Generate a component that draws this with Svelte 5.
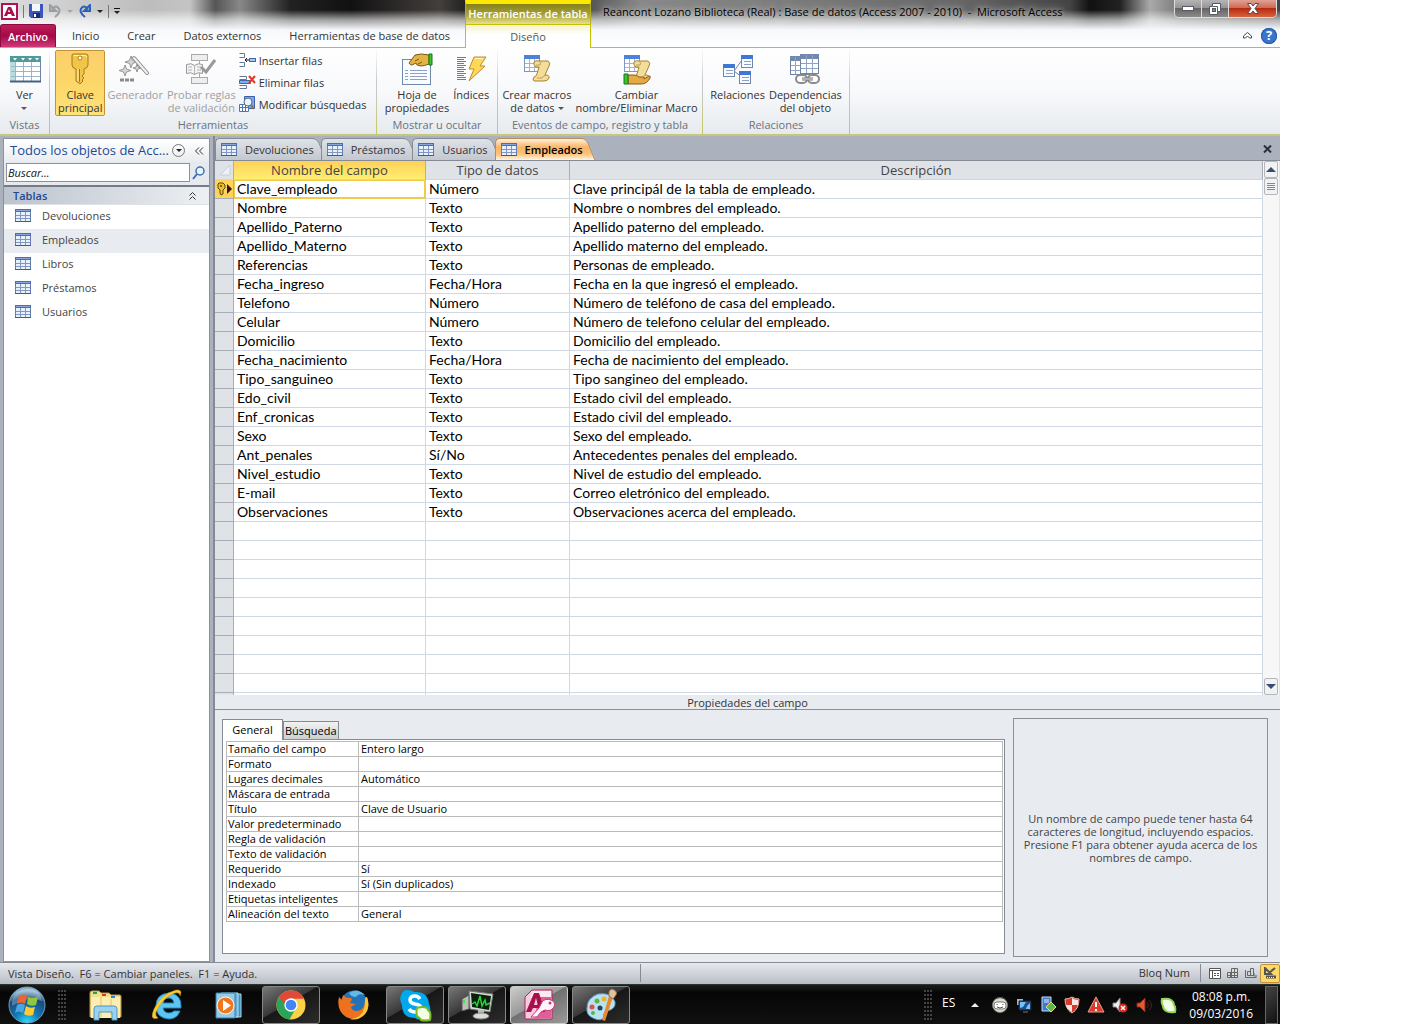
<script lang="ts">
  type Field = { name: string; type: string; desc: string };

  const ribbonTabs = ["Inicio", "Crear", "Datos externos", "Herramientas de base de datos"];

  const tables = ["Devoluciones", "Empleados", "Libros", "Préstamos", "Usuarios"];
  const docTabs = ["Devoluciones", "Préstamos", "Usuarios", "Empleados"];
  let current = $state("Empleados");
  let propTab = $state("General");

  const fields: Field[] = [
    { name: "Clave_empleado", type: "Número", desc: "Clave principál de la tabla de empleado." },
    { name: "Nombre", type: "Texto", desc: "Nombre o nombres del empleado." },
    { name: "Apellido_Paterno", type: "Texto", desc: "Apellido paterno del empleado." },
    { name: "Apellido_Materno", type: "Texto", desc: "Apellido materno del empleado." },
    { name: "Referencias", type: "Texto", desc: "Personas de empleado." },
    { name: "Fecha_ingreso", type: "Fecha/Hora", desc: "Fecha en la que ingresó el empleado." },
    { name: "Telefono", type: "Número", desc: "Número de teléfono de casa del empleado." },
    { name: "Celular", type: "Número", desc: "Número de telefono celular del empleado." },
    { name: "Domicilio", type: "Texto", desc: "Domicilio del empleado." },
    { name: "Fecha_nacimiento", type: "Fecha/Hora", desc: "Fecha de nacimiento del empleado." },
    { name: "Tipo_sanguineo", type: "Texto", desc: "Tipo sangineo del empleado." },
    { name: "Edo_civil", type: "Texto", desc: "Estado civil del empleado." },
    { name: "Enf_cronicas", type: "Texto", desc: "Estado civil del empleado." },
    { name: "Sexo", type: "Texto", desc: "Sexo del empleado." },
    { name: "Ant_penales", type: "Sí/No", desc: "Antecedentes penales del empleado." },
    { name: "Nivel_estudio", type: "Texto", desc: "Nivel de estudio del empleado." },
    { name: "E-mail", type: "Texto", desc: "Correo eletrónico del empleado." },
    { name: "Observaciones", type: "Texto", desc: "Observaciones acerca del empleado." },
  ];
  // empty rows below the last field
  const blankRows = Array.from({ length: 10 });

  const props = [
    ["Tamaño del campo", "Entero largo"],
    ["Formato", ""],
    ["Lugares decimales", "Automático"],
    ["Máscara de entrada", ""],
    ["Título", "Clave de Usuario"],
    ["Valor predeterminado", ""],
    ["Regla de validación", ""],
    ["Texto de validación", ""],
    ["Requerido", "Sí"],
    ["Indexado", "Sí (Sin duplicados)"],
    ["Etiquetas inteligentes", ""],
    ["Alineación del texto", "General"],
  ];

  const taskItems = [
    { id: "explorer", label: "Explorador de Windows", open: false },
    { id: "ie", label: "Internet Explorer", open: false },
    { id: "wmp", label: "Reproductor de Windows Media", open: false },
    { id: "chrome", label: "Google Chrome", open: true },
    { id: "firefox", label: "Firefox", open: false },
    { id: "skype", label: "Skype", open: true },
    { id: "taskmgr", label: "Administrador de tareas", open: true },
    { id: "access", label: "Microsoft Access", open: true },
    { id: "paint", label: "Paint", open: true },
  ];
  const trayItems = ["face", "screens", "server", "shield", "warning", "muted", "sound", "leaf"];
</script>

{#snippet sheet()}
  <svg width="16" height="13" viewBox="0 0 16 13" aria-hidden="true">
    <rect x="0.5" y="0.5" width="15" height="12" fill="#e9f0fb" stroke="#5f7db0" />
    <rect width="16" height="3" fill="#4a6fae" />
    <path d="M1 1.5h14" stroke="#86a7dc" />
    <path d="M1 6.5h14M1 9.5h14M5.5 3v10M10.5 3v10" stroke="#7f98c2" />
    <path d="M0 12.5h16" stroke="#3f5a8c" />
  </svg>
{/snippet}

{#snippet bigIcon(name: string)}
  <svg width="32" height="32" viewBox="0 0 32 32" aria-hidden="true">
    {#if name === "view"}
      <rect x="1.5" y="3.5" width="30" height="25" fill="#fff" stroke="#6d84a6" />
      <rect x="1" y="3" width="31" height="6" fill="#4f9a9d" />
      <path d="M4 5h4l-2 2.500zM12 5h4l-2 2.500zM19 5h4l-2 2.500zM26 5h4l-2 2.500z" fill="#fff" />
      <rect x="1" y="9" width="5" height="19" fill="#b9dcdc" />
      <path d="M2 13.500h29M2 18.500h29M2 23.500h29M6.500 9v19M14.500 9v19M22.500 9v19" stroke="#9fb2cd" />
      <path d="M1 28.500h31" stroke="#456083" stroke-width="2" />
    {:else if name === "key"}
      <path d="M9 1h13q2 0 2 2v9q0 3-4 4v5l-2 2 2 2-2 2 1 1-3 3-4-3V16q-4-1-4-4V3q0-2 1-2z" fill="#f0c548" stroke="#a77b1d" />
      <path d="M10 2.500h11q1.500 0 1.500 2" fill="none" stroke="#fff3b3" />
      <circle cx="16" cy="5" r="2" fill="#fff" stroke="#a77b1d" />
      <path d="M15.500 16v13" stroke="#9b741b" />
      <path d="M14 16v12" stroke="#fdf0a6" />
    {:else if name === "wand"}
      <path d="M12 3l1.500 4.500L18 9l-4.500 1.500L12 15l-1.500-4.500L6 9l4.500-1.500zM18 11l1 3 3 1-3 1-1 3-1-3-3-1 3-1zM6 12l1.500 4L12 17.500 7.500 19 6 23l-1.500-4L0 17.500 4.500 16z" fill="#d5d5d5" stroke="#989898" />
      <path d="M15 5l13 15" stroke="#8d8d8d" stroke-width="4" stroke-linecap="round" />
      <path d="M15 5l13 15" stroke="#f2f2f2" stroke-width="2" stroke-linecap="round" />
      <path d="M1 27h14" stroke="#8a8a8a" stroke-width="3" stroke-dasharray="4 1" />
    {:else if name === "rules"}
      <path d="M14.500 7v19" stroke="#aaa" />
      <rect x="6.500" y="1.500" width="16" height="6" fill="#eee" stroke="#aaa" />
      <rect x="6.500" y="24.500" width="16" height="6" fill="#eee" stroke="#aaa" />
      <path d="M1.500 11.500q5-2 8 1 4-3 8-1v9q-4-2-8 1-4-3-8-1z" fill="#f3f3f3" stroke="#989898" />
      <path d="M9.500 12v9M3 14h4M3 17h4M12 14h4M12 17h4" stroke="#b5b5b5" />
      <path d="M16 14l5 5L30 7" fill="none" stroke="#999" stroke-width="3" />
    {:else if name === "sheetHand"}
      <rect x="1.500" y="6.500" width="28" height="25" fill="#f8fbff" stroke="#7188ad" />
      <path d="M4 17.500h3M9 17.500h17M4 20.500h3M9 20.500h17M4 23.500h3M9 23.500h17M4 26.500h3M9 26.500h17" stroke="#8ba0c2" />
      <path d="M8 10l6-8q6-2 14 0v9q-5 2-8 2l-4-1-1-2-4 2q-2 0-3-2z" fill="#e3b345" stroke="#7c5718" />
      <path d="M14 8l4-2M17 11l4-2" stroke="#7c5718" />
      <path d="M28 1h3v11h-3z" fill="#35c52d" stroke="#16781a" />
    {:else if name === "bolt"}
      <path d="M2 4.500h9M2 6.500h7M2 8.500h9M2 10.500h7M2 12.500h9M2 14.500h7M2 16.500h9M2 18.500h7M2 20.500h9M2 22.500h7M2 24.500h9M2 26.500h9" stroke="#7b7b7b" />
      <path d="M19 4h12l-6 9h5L14 28l5-12h-5z" fill="#ffd759" stroke="#c38b26" />
      <path d="M20 5.500h8" stroke="#fff6c9" />
    {:else if name === "macro" || name === "rename"}
      <rect x="3.500" y="2.500" width="15" height="16" fill="#fff" stroke="#7c96c6" />
      <rect x="3" y="2" width="16" height="4" fill="#4e82da" />
      <path d="M4 10.500h14M4 14.500h14M8.500 6v12M13.500 6v12" stroke="#a2b4d5" />
      <path d="M13 9q2-2 5-1h9q3 2 1 5l-4 9q5 0 4 3-1 3-5 3H13q-2-2 0-4 2 0 3-3l2-7h-3q-3-2-2-5z" fill="#f3dd9a" stroke="#a9822f" />
      <path d="M15 12h4q1-1 0-3M16 25h5q1-2 4-3" fill="none" stroke="#c29c4d" />
      {#if name === "rename"}
        <path d="M7 22h6q3 0 5 2h4q2 0 1 2l5-3q2 0 1 2-3 6-9 6H7z" fill="#e3aa45" stroke="#8a5b18" />
        <path d="M3 21h4v10H3z" fill="#35c52d" stroke="#16781a" />
      {/if}
    {:else if name === "relations"}
      <path d="M12 18l8-11M12 18l8 6" stroke="#6f83a5" fill="none" />
      {#each [[1, 11], [19, 2], [17, 18]] as [x, y]}
        <rect x={x + 0.5} y={y + 0.5} width="11" height="12" fill="#f8fbff" stroke="#7188ad" />
        <rect {x} {y} width="12" height="4" rx="1" fill="#3d77d8" />
        <path d="M{x + 3} {y + 6.5}h7M{x + 3} {y + 9.5}h7" stroke="#8ba0c2" />
      {/each}
    {:else if name === "depends"}
      <rect x="1.500" y="3.500" width="19" height="18" fill="#fff" stroke="#6d84a6" />
      <rect x="1" y="3" width="19" height="5" fill="#7388ae" />
      <path d="M2 12.500h10M2 17.500h10M6.500 4v17" stroke="#8fa3c4" />
      <rect x="11.500" y="1.500" width="18" height="19" fill="#fff" stroke="#6d84a6" />
      <rect x="11" y="1" width="19" height="5" fill="#7388ae" />
      <path d="M12 10.500h17M12 15.500h17M17.500 2v18M23.500 2v18" stroke="#8fa3c4" />
      <rect x="7" y="22" width="11" height="8" rx="4" fill="#fff" stroke="#8a8a8a" stroke-width="2" />
      <rect x="19" y="22" width="11" height="8" rx="4" fill="#fff" stroke="#8a8a8a" stroke-width="2" />
      <path d="M13 26h11" stroke="#777" stroke-width="3" />
      <path d="M13 26h11" stroke="#e8e8e8" />
    {/if}
  </svg>
{/snippet}

{#snippet bigButton(icon: string, label: string, disabled = false, active = false, menu = false)}
  <button class="big" class:active {disabled}>
    {@render bigIcon(icon)}
    <span>{label}{#if menu}<i class="caret"></i>{/if}</span>
  </button>
{/snippet}

{#snippet taskIcon(name: string)}
  <svg width="34" height="34" viewBox="0 0 34 34" aria-hidden="true">
    {#if name === "explorer"}
      <path d="M2 5q0-2 2-2h7l2 2h8l2 2h9q1 0 1 2v20H2z" fill="#f4dd8b" stroke="#b89643" />
      <path d="M3 9h29v21H3z" fill="#fbeeb0" />
      <path d="M5 5h4" stroke="#18a44a" stroke-width="2" />
      <path d="M14 7h4" stroke="#d3362c" stroke-width="2" />
      <path d="M23 9h4" stroke="#2185d7" stroke-width="2" />
      <path d="M13 9v20M23 11v16" stroke="#dfc36b" />
      <path d="M6 32V21q0-3 3-3h17q3 0 3 3v11h-5v-8H11v8z" fill="#9bd3ee" stroke="#4e96c3" />
    {:else if name === "ie"}
      <path d="M31 20H13q1 5 6 5 3 0 5-2h6q-3 8-11 8Q6 30 6 18T19 5q13 1 12 15zM13 15h11q-1-5-5.500-5T13 15z" fill="#5cc6f2" stroke="#2587c4" fill-rule="evenodd" />
      <path d="M8 30Q-1 33 4 21 11 6 26 2q7-1 4 6 0-4-5-3Q13 9 6 24q-1 4 2 6z" fill="#f8cc35" stroke="#c98e13" stroke-width="0.500" />
    {:else if name === "wmp"}
      <path d="M12 6h17v23H12z" fill="#3e8fc2" stroke="#a6d8ef" />
      <path d="M9 5h17v24H9z" fill="#65afd7" stroke="#b7e2f5" />
      <path d="M4 5h19v25H4z" fill="#93cce9" stroke="#397ca9" />
      <circle cx="13.500" cy="17.500" r="8.500" fill="#ef7720" stroke="#fff" />
      <path d="M11 12l8 5.500-8 5.500z" fill="#fff" />
    {:else if name === "chrome"}
      <circle cx="17" cy="17" r="14.500" fill="#fbd245" />
      <path d="M17 17L4.500 9.700A14.500 14.500 0 0 0 15.500 31.400L22 20z" fill="#2ba45a" />
      <path d="M17 2.500A14.500 14.500 0 0 1 30.200 10.700H17L10 15 4.500 9.700A14.500 14.500 0 0 1 17 2.500z" fill="#df4b3a" />
      <circle cx="17" cy="17" r="6.700" fill="#fff" />
      <circle cx="17" cy="17" r="5.300" fill="#4285f4" />
    {:else if name === "firefox"}
      <circle cx="18" cy="16" r="13.500" fill="#2472b8" />
      <path d="M13 5q8-6 16 2-7-2-9 2-5 0-7-4z" fill="#64b9e6" />
      <path d="M31 9q4 11-3 18-8 7-18 2Q0 22 3 9l3 3 1-5 4 3q3-1 5 1l-2 4 6 1-5 3q1 4 6 4 9-1 8-14z" fill="#ee711d" />
      <path d="M31 9q4 12-4 19-6 5-13 3 16-1 15-20z" fill="#fbc832" />
    {:else if name === "skype"}
      <path d="M9 2q5 0 7 2 14-1 15 12 4 9-4 14-6 3-10 0Q4 30 4 17q-3-6-1-10 2-5 6-5z" fill="#00a9ed" />
      <path d="M22 11q-2-3-5-3-5 0-5 4 0 3 5 4 6 1 6 4 0 4-6 4-4 0-6-3" fill="none" stroke="#fff" stroke-width="3.500" />
      <path d="M19 20q6-2 10 0 1 3 3 4 1 4 0 8-5 1-9 0-1-2-4-4-1-4 0-8z" fill="#f5ffe1" stroke="#79b928" stroke-width="2" />
    {:else if name === "taskmgr"}
      <path d="M2 11l7-4v14l-7 2z" fill="#bcbfb8" stroke="#555" />
      <path d="M4 12v3" stroke="#3fe841" stroke-width="2" />
      <path d="M9 3l24 3-3 18-20-3z" fill="#d8dbd4" stroke="#777" />
      <path d="M11 5l20 3-2 14-17-3z" fill="#07210a" />
      <path d="M12 16l3-2 2 4 3-10 2 10 3-6 1 5 4-2" fill="none" stroke="#28d43a" stroke-width="1.500" />
      <path d="M18 22h6v6h-6z" fill="#bbb" />
      <ellipse cx="21" cy="28" rx="8" ry="3" fill="#dadcd8" stroke="#888" />
    {:else if name === "access"}
      <path d="M10 2h20v29H3V9z" fill="#f9cadd" stroke="#b3235f" />
      <path d="M11 3h18v7H8z" fill="#fceaf2" />
      <path d="M16 9h13v21H13z" fill="#df5f98" />
      <path d="M12 5h5l6 19h-5l-1-4h-6l-2 4H4zM14 10l-2 7h4z" fill="#a80f4b" fill-rule="evenodd" />
      <path d="M20 14q3-4 9-2 5 2 3 7-3 5-9 3l-4 2-4 5H9l8-9z" fill="#fff4f8" stroke="#c93878" />
      <circle cx="28" cy="15" r="1.500" fill="#c93878" />
    {:else if name === "paint"}
      <path d="M3 20q0-10 11-14 14-2 17 8 1 7-8 9-4 1-3 6-3 5-11 1Q2 27 3 20z" fill="#b9e1f4" stroke="#6b9fc0" />
      <circle cx="8" cy="19" r="2.500" fill="#e24f43" />
      <circle cx="13" cy="13" r="2.500" fill="#61b343" />
      <circle cx="20" cy="11" r="2.500" fill="#f2b423" />
      <circle cx="9" cy="25" r="2" fill="#61b343" />
      <circle cx="16" cy="20" r="2.500" fill="#244759" />
      <path d="M25 8l4 1-8 24-3-1z" fill="#e9892e" />
      <path d="M25 8q-1-6 3-7 6 2 4 6l-3 4z" fill="#e3c399" stroke="#936b42" />
    {/if}
  </svg>
{/snippet}

{#snippet trayIcon(name: string)}
  <svg width="18" height="18" viewBox="0 0 18 18" aria-hidden="true">
    {#if name === "face"}
      <circle cx="9" cy="9" r="7.500" fill="#dadbd1" stroke="#75796b" />
      <rect x="3" y="6" width="12" height="7" rx="3" fill="#fff" stroke="#777" />
      <path d="M6 8v1M12 8v1M6 11q3 2 6 0M4 3q5-3 10 0" fill="none" stroke="#555" />
    {:else if name === "screens"}
      <path d="M2 3h6v6H2z" fill="#9fb8cc" />
      <path d="M4 5h12v9H4z" fill="#1e4f8c" stroke="#222" />
      <path d="M5 6h6l-3 5-3 1zM12 10l3-3v6h-4z" fill="#72c1ff" />
      <path d="M8 16h5" stroke="#777" />
    {:else if name === "server"}
      <path d="M3 1h9v14H3z" fill="#3f79d0" stroke="#c6ddfa" />
      <path d="M5 4h5M5 6h5" stroke="#e3f0ff" />
      <path d="M12 6l5 5-5 5-5-5z" fill="#5cb84c" stroke="#f0dd6d" />
    {:else if name === "shield"}
      <path d="M9 1q3 2 7 2 0 10-7 14Q2 13 2 3q4 0 7-2z" fill="#d8382a" stroke="#e9b8b0" />
      <path d="M9 2q3 2 6 2v5H9zM3 9h6v7Q4 13 3 9z" fill="#f8e7e3" />
    {:else if name === "warning"}
      <path d="M9 1l8 15H1z" fill="#da3b2b" stroke="#f09a8e" />
      <path d="M9 6v5M9 13v2" stroke="#fff" stroke-width="2" />
    {:else if name === "muted"}
      <path d="M2 7h3l4-5v14l-4-5H2z" fill="#eee" stroke="#888" />
      <circle cx="12" cy="12" r="4.500" fill="#d8281d" />
      <path d="M10 10l4 4M14 10l-4 4" stroke="#fff" stroke-width="1.500" />
    {:else if name === "sound"}
      <path d="M2 7h3l5-5v14l-5-5H2z" fill="#e05a38" stroke="#8b2715" />
      <path d="M12 6q3 3 0 6M14 4q5 5 0 10" fill="none" stroke="#5c1f16" />
    {:else if name === "leaf"}
      <path d="M3 3q6-1 9 1 3 2 3 5 2 2 1 7-6 1-9-1-3-2-3-5-2-3-1-7z" fill="#f2ffe8" stroke="#91d44f" stroke-width="2" />
    {/if}
  </svg>
{/snippet}

<div class="desktop">
  <header>
    <div class="quick">
      <svg width="17" height="17" viewBox="0 0 17 17" aria-hidden="true">
        <rect x="1" y="1" width="15" height="15" fill="#fff" stroke="#b01253" stroke-width="2" />
        <path d="M7 4h3l4 9h-3l-1-2H7l-1 2H3zM8 6l-1 3h2z" fill="#a90d4d" fill-rule="evenodd" />
      </svg>
      <i class="bar"></i>
      <button aria-label="Guardar">
        <svg width="14" height="14" viewBox="0 0 14 14"><path d="M0 0h14v14H2l-2-2z" fill="#3b56bd" /><path d="M3 0h8v7H3z" fill="#f2f6ff" /><path d="M4 9h7v5H4z" fill="#1c2d68" /><path d="M5 10h2v3H5z" fill="#fff" /></svg>
      </button>
      <button aria-label="Deshacer">
        <svg width="14" height="14" viewBox="0 0 14 14"><path d="M2 1v6h6zM4 5.500Q7 1 10 3.500q4 4-3 9.500" fill="none" stroke="#9a9da2" stroke-width="2" /></svg>
      </button>
      <i class="caret dim"></i>
      <button aria-label="Rehacer">
        <svg width="14" height="14" viewBox="0 0 14 14"><path d="M12 1v6H6zM10 5.500Q7 1 4 3.500q-4 4 3 9.500" fill="none" stroke="#2e62b8" stroke-width="2" /></svg>
      </button>
      <i class="caret"></i>
      <i class="bar"></i>
      <button class="custom" aria-label="Personalizar barra"><i class="caret"></i></button>
    </div>
    <div class="context-name">Herramientas de tabla</div>
    <div class="title-row">
      <span>Reancont Lozano Biblioteca (Real) : Base de datos (Access 2007 - 2010)&nbsp; -&nbsp; Microsoft Access</span>
      <div class="window-buttons">
        <button aria-label="Minimizar"><svg width="12" height="5" viewBox="0 0 12 5"><rect x="0.500" y="0.500" width="11" height="4" fill="#fff" stroke="#555a66" /></svg></button>
        <button aria-label="Restaurar"><svg width="12" height="12" viewBox="0 0 12 12"><path d="M3.500 0.500h8v8h-3v3h-8v-8h3z" fill="#fff" stroke="#555a66" /><rect x="3.500" y="5.500" width="3" height="3" fill="#888" stroke="#555a66" /><path d="M4 3.500h4.500v5" fill="none" stroke="#555a66" /></svg></button>
        <button class="close" aria-label="Cerrar"><svg width="12" height="11" viewBox="0 0 12 11"><path d="M0.500 0.500h3.500l2 2.500 2-2.500h3.500l-3.500 5 3.500 5H8l-2-2.500-2 2.500H0.500l3.500-5z" fill="#fff" stroke="#5d4650" /></svg></button>
      </div>
    </div>
    <nav class="ribbon-tabs">
      <button class="file">Archivo</button>
      {#each ribbonTabs as tab}
        <button>{tab}</button>
      {/each}
    </nav>
    <button class="context-tab">Diseño</button>
    <div class="help">
      <button aria-label="Minimizar la cinta"><svg width="9" height="7" viewBox="0 0 9 7"><path d="M0.500 4L4.500 0.500 8.500 4v2h-2l-2-2-2 2h-2z" fill="#fff" stroke="#42464e" /></svg></button>
      <button class="ask" aria-label="Ayuda">?</button>
    </div>
  </header>

  <section class="ribbon">
    <div class="group views">
      <div class="group-body">{@render bigButton("view", "Ver\n", false, false, true)}</div>
      <h2>Vistas</h2>
    </div>
    <div class="group tools">
      <div class="group-body">
        {@render bigButton("key", "Clave\nprincipal", false, true)}
        {@render bigButton("wand", "Generador", true)}
        {@render bigButton("rules", "Probar reglas\nde validación", true)}
        <div class="small-buttons">
          <button>
            <svg width="17" height="16" viewBox="0 0 17 16" aria-hidden="true"><path d="M0.500 1.500h5v4h-5M0.500 10.500h5v4h-5" fill="#fff" stroke="#64779b" /><path d="M6 8h4M8 6L6 8l2 2" stroke="#111" fill="none" /><rect x="10.500" y="6.500" width="6" height="3" fill="#a6c5ef" stroke="#3e68a7" /></svg>
            Insertar filas
          </button>
          <button>
            <svg width="17" height="16" viewBox="0 0 17 16" aria-hidden="true"><path d="M0.500 2.500h7v3h-7M0.500 11.500h7v3h-7" fill="#fff" stroke="#64779b" /><path d="M0.500 6.500h11v3h-11z" fill="#80aef0" stroke="#3e68a7" /><path d="M10 2l6 7M16 2l-6 7" stroke="#e23b22" stroke-width="2" /></svg>
            Eliminar filas
          </button>
          <button>
            <svg width="17" height="16" viewBox="0 0 17 16" aria-hidden="true"><path d="M5.500 0.500h10v12h-10z" fill="#7fa5ea" stroke="#365fae" /><path d="M0.500 8.500h9v7h-9zM0 11.500h10M3.500 8v8M6.500 8v8" fill="#fff" stroke="#4c74b8" /><circle cx="9" cy="6" r="4" fill="#eef5ff" stroke="#596b8a" /><path d="M12 9l3 4" stroke="#9c6e37" stroke-width="2" /></svg>
            Modificar búsquedas
          </button>
        </div>
      </div>
      <h2>Herramientas</h2>
    </div>
    <div class="group show">
      <div class="group-body">
        {@render bigButton("sheetHand", "Hoja de\npropiedades")}
        {@render bigButton("bolt", "Índices")}
      </div>
      <h2>Mostrar u ocultar</h2>
    </div>
    <div class="group events">
      <div class="group-body">
        {@render bigButton("macro", "Crear macros\nde datos", false, false, true)}
        {@render bigButton("rename", "Cambiar\nnombre/Eliminar Macro")}
      </div>
      <h2>Eventos de campo, registro y tabla</h2>
    </div>
    <div class="group relations">
      <div class="group-body">
        {@render bigButton("relations", "Relaciones")}
        {@render bigButton("depends", "Dependencias\ndel objeto")}
      </div>
      <h2>Relaciones</h2>
    </div>
  </section>

  <div class="workspace">
    <aside>
      <div class="nav-title">
        <span>Todos los objetos de Acc...</span>
        <button class="round" aria-label="Elegir categoría"><i class="caret"></i></button>
        <button class="collapse" aria-label="Contraer panel">
          <svg width="9" height="8" viewBox="0 0 9 8"><path d="M4 0.500L0.500 4 4 7.500M8 0.500L4.500 4 8 7.500" fill="none" stroke="#333" /></svg>
        </button>
      </div>
      <div class="search">
        <input type="text" placeholder="Buscar..." aria-label="Buscar" />
        <button aria-label="Buscar objetos"><svg width="13" height="14" viewBox="0 0 13 14"><circle cx="8" cy="5" r="4" fill="#eaf4ff" stroke="#3f6fb2" stroke-width="1.500" /><path d="M5 8L1 13" stroke="#3f6fb2" stroke-width="2" /></svg></button>
      </div>
      <button class="nav-group">
        Tablas
        <svg width="7" height="8" viewBox="0 0 7 8" aria-hidden="true"><path d="M0.500 3.500l3-3 3 3M0.500 7.500l3-3 3 3" fill="none" stroke="#333" /></svg>
      </button>
      <ul>
        {#each tables as table}
          <li><button class:selected={table === current} onclick={() => (current = table)}>{@render sheet()}{table}</button></li>
        {/each}
      </ul>
    </aside>

    <main>
      <div class="doc-tabs">
        {#each docTabs as tab}
          <button class="doc" class:current={tab === current} onclick={() => (current = tab)}>{@render sheet()}{tab}</button>
        {/each}
        <button class="close-doc" aria-label="Cerrar tabla"><svg width="9" height="8" viewBox="0 0 9 8"><path d="M1 0.500l7 7M8 0.500l-7 7" stroke="#2d3038" stroke-width="2" /></svg></button>
      </div>

      <div class="design">
        <div class="grid">
          <table>
            <colgroup><col class="c-select" /><col class="c-name" /><col class="c-type" /><col /></colgroup>
            <thead>
              <tr>
                <th class="corner"><svg width="12" height="12" viewBox="0 0 12 12" aria-hidden="true"><path d="M11 1v10H1z" fill="#eef0f3" stroke="#c5cfdc" /></svg></th>
                <th class="hot">Nombre del campo</th>
                <th>Tipo de datos</th>
                <th>Descripción</th>
              </tr>
            </thead>
            <tbody>
              {#each fields as field, i}
                <tr class:active={i === 0}>
                  <td class="selector">
                    {#if i === 0}
                      <svg width="15" height="14" viewBox="0 0 15 14" aria-hidden="true"><path d="M2 1h4l2 2v3L6 8v4l-2 1-1-2V8L1 6V2z" fill="#e9c030" stroke="#5f4305" /><circle cx="4" cy="4" r="1" fill="#5f4305" /><path d="M10 2l5 5-5 5z" fill="#3a1212" /></svg>
                    {/if}
                  </td>
                  <td>{field.name}</td>
                  <td>{field.type}</td>
                  <td>{field.desc}</td>
                </tr>
              {/each}
              {#each blankRows as _}
                <tr><td class="selector"></td><td></td><td></td><td></td></tr>
              {/each}
            </tbody>
          </table>
        </div>
        <div class="scrollbar">
          <button aria-label="Subir"><i class="tri up"></i></button>
          <div class="thumb"></div>
          <button class="down" aria-label="Bajar"><i class="tri"></i></button>
        </div>
      </div>

      <h3>Propiedades del campo</h3>
      <div class="properties">
        <div class="prop-panel">
          <div class="prop-tabs">
            {#each ["General", "Búsqueda"] as tab}
              <button class:on={tab === propTab} onclick={() => (propTab = tab)}>{tab}</button>
            {/each}
          </div>
          <div class="prop-body">
            <table>
              <tbody>
                {#each props as [name, value]}
                  <tr><th scope="row">{name}</th><td>{value}</td></tr>
                {/each}
              </tbody>
            </table>
          </div>
        </div>
        <p>Un nombre de campo puede tener hasta 64 caracteres de longitud, incluyendo espacios. Presione F1 para obtener ayuda acerca de los nombres de campo.</p>
      </div>
    </main>
  </div>

  <div class="status">
    <span class="hint">Vista Diseño.&nbsp; F6 = Cambiar paneles.&nbsp; F1 = Ayuda.</span>
    <span class="num">Bloq Num</span>
    <div class="view-buttons">
      <button aria-label="Vista Hoja de datos"><svg width="12" height="11" viewBox="0 0 12 11"><path d="M0.500 0.500h11v10h-11zM1 2.500h10M3.500 3v7M5 5.500h2M8 5.500h2M5 7.500h2M8 7.500h2" fill="#fff" stroke="#555" /></svg></button>
      <button aria-label="Vista Tabla dinámica"><svg width="12" height="11" viewBox="0 0 12 11"><path d="M4.500 0.500h6v9h-6zM0.500 4.500h10v5h-10zM7.500 1v9M3.500 4v6M1 7.500h9" fill="#ddd" stroke="#666" /></svg></button>
      <button aria-label="Vista Gráfico dinámico"><svg width="12" height="11" viewBox="0 0 12 11"><path d="M5.500 0.500h3v7h-3zM2.500 3.500h3v4h-3zM0.500 2v7.500h11M9 5v3h3" fill="none" stroke="#666" /></svg></button>
      <button class="on" aria-label="Vista Diseño"><svg width="13" height="12" viewBox="0 0 13 12"><path d="M1 1v6h6zM5 6l6-5" fill="none" stroke="#555" stroke-width="2" /><path d="M2 10h10" stroke="#555" stroke-width="3" /><path d="M3 10.500h8" stroke="#ffe9a0" stroke-dasharray="1 1" /></svg></button>
    </div>
  </div>

  <footer>
    <button class="start" aria-label="Inicio de Windows">
      <svg width="38" height="38" viewBox="0 0 38 38">
        <defs>
          <radialGradient id="orb" cx="0.5" cy="1" r="0.9">
            <stop offset="0" stop-color="#31e2ff" />
            <stop offset="0.4" stop-color="#1478b5" />
            <stop offset="0.8" stop-color="#1a4a78" />
            <stop offset="1" stop-color="#8eb4cd" />
          </radialGradient>
        </defs>
        <circle cx="19" cy="19" r="18" fill="url(#orb)" stroke="#6f9cb8" />
        <path d="M4 15Q7 4 19 3t15 12Q19 9 4 20z" fill="#fff" opacity="0.25" />
        <path d="M11 10q4-3 8 0l-2 8q-4-3-8 0z" fill="#ee6530" />
        <path d="M20 11q4 2 10 0l-2 8q-5 2-9-1z" fill="#91c83e" />
        <path d="M9 19q4-3 8 0l-2 8q-4-3-8 0z" fill="#4ba5df" />
        <path d="M18 20q4 3 9 1l-2 8q-5 2-9-1z" fill="#fdcc35" />
      </svg>
    </button>
    <i class="grip"></i>
    <div class="tasks">
      {#each taskItems as item}
        <button class:open={item.open} class:front={item.id === "access"} aria-label={item.label}>{@render taskIcon(item.id)}</button>
      {/each}
    </div>
    <i class="grip"></i>
    <span class="lang">ES</span>
    <i class="tri up light"></i>
    <div class="tray">
      {#each trayItems as item}
        {@render trayIcon(item)}
      {/each}
    </div>
    <time>08:08 p.m.<br />09/03/2016</time>
    <button class="peek" aria-label="Mostrar escritorio"></button>
  </footer>
</div>

<style>
  :global(body) {
    margin: 0;
    background: #fff;
  }
  * {
    box-sizing: border-box;
  }
  button {
    margin: 0;
    padding: 0;
    border: 0;
    background: none;
    color: inherit;
    font: inherit;
  }
  svg {
    display: block;
    flex: none;
  }
  h2,
  h3,
  p,
  ul {
    margin: 0;
    padding: 0;
    font-weight: normal;
    list-style: none;
  }
  .desktop {
    display: flex;
    flex-direction: column;
    height: 100vh;
    margin-right: 148px;
    font: 11px/13px "Open Sans", "Noto Sans", sans-serif;
    color: #333;
  }
  .caret {
    display: inline-block;
    border: 3px solid transparent;
    border-top-color: #222;
    border-bottom: 0;
  }
  .caret.dim {
    border-top-color: #a4a7ac;
  }

  /* title bar and ribbon tabs */
  header {
    display: grid;
    grid-template-columns: 465px 126px 1fr;
    grid-template-rows: 24px 24px;
    background:
      linear-gradient(rgba(255, 255, 255, 0) 10px, rgba(255, 255, 255, 0.6) 20px, #f6f8fb 30px, #fff 47px),
      linear-gradient(90deg, #dcdcdc, #bdbdbd 150px, #c4c4c4 190px, #555 215px, #888 240px, #222 290px, #111 350px, #443f3d 440px, #1b1b1b 470px, #555 590px, #8a8a8a 640px, #777 830px, #666 960px, #444 1070px, #111 1090px, #222 1120px, #aaa 1150px, #777 1180px, #444);
  }
  .quick {
    display: flex;
    align-items: center;
    gap: 5px;
    padding: 0 1px 2px;
  }
  .quick .bar {
    width: 1px;
    height: 13px;
    background: #777;
  }
  .custom {
    border-top: 1px solid #111;
    padding-top: 2px;
    display: flex;
  }
  .context-name {
    border: 1px solid #b5b01c;
    border-top: 4px solid #fde900;
    border-bottom: 0;
    background: linear-gradient(#85811a, #a5a035 50%, #e5e190);
    color: #fff;
    font-weight: 600;
    text-align: center;
    line-height: 20px;
    white-space: nowrap;
  }
  .title-row {
    display: flex;
    justify-content: space-between;
    align-items: center;
    padding-left: 12px;
    color: #000;
    white-space: nowrap;
  }
  .title-row > span {
    padding-bottom: 2px;
    text-shadow: 0 0 4px #bbb, 0 0 8px #bbb, 0 0 12px #aaa;
  }
  .window-buttons {
    display: flex;
    align-self: flex-start;
    height: 18px;
    margin-right: 3px;
    border: 1px solid #ddd;
    border-top: 0;
    border-radius: 0 0 5px 5px;
    overflow: hidden;
  }
  .window-buttons button {
    display: grid;
    place-items: center;
    width: 27px;
    border-right: 1px solid #ddd;
    background: linear-gradient(#b5b5b5, #929292 50%, #656565 50%, #8a8a8a);
  }
  .window-buttons .close {
    width: 47px;
    border: 0;
    background: linear-gradient(#dfa293, #cb6550 50%, #b82a10 50%, #d9633e);
  }
  .ribbon-tabs {
    display: flex;
    border-bottom: 1px solid #c5c100;
  }
  .ribbon-tabs button {
    flex: none;
    padding: 0 14px;
  }
  .ribbon-tabs .file {
    width: 56px;
    margin-right: 2px;
    padding: 0;
    border: 1px solid #8c0a3f;
    border-bottom: 0;
    border-radius: 3px 3px 0 0;
    background: linear-gradient(#bd1f5c, #a60746 50%, #d03a7a);
    color: #fff;
    font-weight: 600;
  }
  .context-tab {
    border: 1px solid #c5c100;
    border-width: 1px 1px 0;
    background: linear-gradient(#f5f3cd, #fff 10px);
    color: #555;
  }
  .help {
    display: flex;
    justify-content: flex-end;
    align-items: center;
    gap: 9px;
    padding-right: 3px;
    border-bottom: 1px solid #c5c100;
  }
  .ask {
    width: 16px;
    height: 16px;
    border-radius: 50%;
    background: #3a75cb;
    box-shadow: inset 0 0 0 1px #2459a6;
    color: #fff;
    font-size: 13px;
    font-weight: bold;
  }

  /* ribbon */
  .ribbon {
    display: flex;
    height: 86px;
    background: linear-gradient(#fff, #f8f9fb 50%, #e6eaee);
  }
  .group {
    display: flex;
    flex-direction: column;
    border-style: solid;
    border-width: 0 1px 0 0;
    border-image: linear-gradient(#fff, #c3c8ce 40%, #c3c8ce 50%, #c8ca55) 1;
  }
  .group-body {
    display: flex;
    justify-content: center;
    padding-top: 2px;
    height: 70px;
  }
  .group h2 {
    font-size: 11px;
    line-height: 14px;
    text-align: center;
    color: #6a727e;
    white-space: nowrap;
  }
  .views {
    width: 50px;
  }
  .tools {
    width: 327px;
  }
  .tools .group-body {
    justify-content: flex-start;
    padding-left: 5px;
  }
  .show {
    width: 121px;
  }
  .events {
    width: 205px;
  }
  .relations {
    width: 147px;
  }
  .big {
    display: flex;
    flex-direction: column;
    align-items: center;
    gap: 3px;
    height: 66px;
    padding: 3px 2px 0;
    border-radius: 2px;
    text-align: center;
    white-space: pre;
  }
  .big:disabled {
    color: #a0a0a0;
  }
  .big.active {
    padding: 2px 2px 0;
    border: 1px solid #c2923a;
    background: linear-gradient(#fbcf6c, #fdd669 50%, #ffe377);
  }
  .big .caret {
    margin: 0 0 2px 3px;
    border-top-color: #555;
  }
  .views .caret {
    margin-left: 0;
  }
  .small-buttons {
    display: flex;
    flex-direction: column;
    padding-left: 1px;
  }
  .small-buttons button {
    display: flex;
    align-items: center;
    gap: 3px;
    height: 22px;
    padding-bottom: 2px;
    white-space: nowrap;
  }

  /* navigation pane */
  .workspace {
    display: flex;
    flex: 1;
    min-height: 0;
    border-top: 2px solid #c5c77c;
    background: #abb2bd;
    padding-left: 3px;
  }
  aside {
    width: 207px;
    margin-top: 2px;
    border: 1px solid #8b929c;
    background: #fff;
  }
  .nav-title {
    display: flex;
    align-items: center;
    height: 23px;
    padding: 0 5px 0 6px;
    background: linear-gradient(#fff, #e9ecf0);
    color: #1e4a93;
    font-size: 13px;
    white-space: nowrap;
  }
  .nav-title span {
    flex: 1;
  }
  .round {
    display: grid;
    place-items: center;
    width: 13px;
    height: 13px;
    border: 1px solid #777;
    border-radius: 50%;
  }
  .collapse {
    margin-left: 10px;
  }
  .search {
    display: flex;
    gap: 2px;
    padding: 1px 4px 3px 2px;
    background: #e6e9ed;
    border-bottom: 2px solid #747b86;
  }
  .search input {
    flex: 1;
    min-width: 0;
    height: 19px;
    padding: 0 1px;
    border: 1px solid #8b929c;
    border-radius: 0;
    font: italic 11px "Open Sans", sans-serif;
  }
  .search input::placeholder {
    color: #111;
  }
  .nav-group {
    display: flex;
    justify-content: space-between;
    align-items: center;
    width: 100%;
    height: 18px;
    padding: 0 13px 0 9px;
    border-bottom: 1px solid #dfe3e8;
    background: linear-gradient(90deg, #bcc3cd, #edf0f3);
    color: #1e4a93;
    font-weight: 600;
  }
  li button {
    display: flex;
    align-items: center;
    gap: 11px;
    width: 100%;
    height: 24px;
    padding: 0 0 3px 11px;
    color: #444;
  }
  li button.selected {
    background: #e8ebef;
  }

  /* open tables */
  main {
    display: flex;
    flex-direction: column;
    flex: 1;
    min-width: 0;
    margin-left: 3px;
    border-left: 2px solid #858b95;
    background: #e8ebf0;
  }
  .doc-tabs {
    display: flex;
    height: 25px;
    padding-top: 2px;
    border-bottom: 1px solid #858b95;
    background: #abb2bd;
  }
  .doc {
    position: relative;
    z-index: 0;
    display: flex;
    align-items: center;
    gap: 8px;
    margin-right: 7px;
    padding: 0 0 1px 5px;
    border: 1px solid #858b95;
    border-width: 1px 0 0 1px;
    border-radius: 5px 0 0 0;
    background: linear-gradient(#dfe2e6, #c3c8d0);
  }
  /* slanted right edge of a tab */
  .doc::after {
    content: "";
    position: absolute;
    z-index: -1;
    top: -1px;
    right: -8px;
    bottom: 0;
    width: 16px;
    border: 1px solid #858b95;
    border-width: 1px 1px 0 0;
    border-radius: 0 6px 0 0;
    background: inherit;
    transform: skewX(22deg);
  }
  .doc.current,
  .doc.current::after {
    border-color: #b98d5b;
  }
  .doc.current {
    background: linear-gradient(#fff0dc, #fbb461 40%, #fdc179 70%, #fff5e3);
    color: #000;
    font-weight: 600;
  }
  .close-doc {
    margin-left: auto;
    padding-right: 8px;
  }
  .design {
    display: flex;
    flex: 1;
    min-height: 0;
  }
  .grid {
    flex: 1;
    overflow: hidden;
    background: #fff;
  }
  table {
    width: 100%;
    border-collapse: separate;
    border-spacing: 0;
    table-layout: fixed;
  }
  .c-select {
    width: 19px;
  }
  .c-name {
    width: 192px;
  }
  .c-type {
    width: 144px;
  }
  .grid th {
    height: 19px;
    padding: 0;
    border: 1px solid #cdd5e3;
    border-width: 0 1px 1px 0;
    border-right-color: #a9adb5;
    background: #dfe2e7;
    color: #444;
    font-size: 13px;
    font-weight: normal;
    line-height: 18px;
  }
  .grid th.hot {
    background: linear-gradient(#ffd15a, #ffee70);
  }
  .corner svg {
    margin-left: 4px;
  }
  .grid td {
    height: 19px;
    padding: 0 3px;
    border: 1px solid #d0d7e5;
    border-width: 0 1px 1px 0;
    color: #000;
    font: 14px/18px Lato, "Noto Sans", sans-serif;
    white-space: nowrap;
  }
  .grid td.selector {
    padding: 0 2px;
    border-color: #a9adb5;
    background: #dfe2e7;
  }
  .active td.selector {
    background: #fed35c;
  }
  .active td:nth-child(2) {
    box-shadow: inset 0 0 0 1px #f0cc4e;
    border-color: #f0cc4e;
  }
  .scrollbar {
    display: flex;
    flex-direction: column;
    width: 17px;
    background: #f7f7f8;
    padding: 0 1px;
    border-right: 1px solid #e2e4e8;
  }
  .scrollbar button,
  .thumb {
    display: grid;
    place-items: center;
    height: 17px;
    border: 1px solid #b3b6bb;
    border-radius: 2px;
    background: #f1f2f4;
  }
  .thumb::before {
    content: "";
    width: 8px;
    height: 8px;
    background: repeating-linear-gradient(#888 0 1px, #f1f2f4 1px 2px);
  }
  .scrollbar .down {
    margin-top: auto;
  }
  .tri {
    border: 5px solid transparent;
    border-top-color: #3b4c74;
    border-bottom: 0;
  }
  .tri.up {
    border-top: 0;
    border-bottom: 5px solid #3b4c74;
  }
  .tri.light {
    border-width: 0 4px 4px;
    border-bottom-color: #eee;
  }

  /* field properties */
  h3 {
    height: 15px;
    border-bottom: 1px solid #8b8f96;
    font-size: 11px;
    line-height: 15px;
    text-align: center;
  }
  .properties {
    display: flex;
    gap: 8px;
    padding: 8px 12px 5px 7px;
    color: #000;
  }
  .prop-panel {
    display: flex;
    flex-direction: column;
    flex: 1;
    margin-bottom: 3px;
  }
  .prop-tabs {
    display: flex;
    align-items: flex-end;
    height: 21px;
  }
  .prop-tabs button {
    height: 18px;
    padding: 0 1px;
    border: 1px solid #868a93;
    border-bottom: 0;
    background: linear-gradient(#f2f2f2, #cfcfcf);
  }
  .prop-tabs button.on {
    width: 61px;
    height: 21px;
    margin-bottom: -1px;
    padding-bottom: 2px;
    background: #fff;
    z-index: 1;
  }
  .prop-body {
    flex: 1;
    padding: 1px 1px 31px 3px;
    border: 1px solid #868a93;
    background: #fff;
  }
  .prop-body table {
    border: 1px solid #bbb;
    border-width: 1px 0 0 1px;
  }
  .prop-body th,
  .prop-body td {
    height: 15px;
    padding: 0 2px;
    border: 1px solid #bbb;
    border-width: 0 1px 1px 0;
    font-weight: normal;
    line-height: 13px;
    text-align: left;
    vertical-align: top;
  }
  .prop-body th {
    width: 132px;
    padding: 0 1px;
  }
  .properties p {
    display: flex;
    align-items: center;
    width: 255px;
    padding: 0 6px;
    border: 1px solid #8b8f96;
    color: #444;
    text-align: center;
  }

  .status {
    display: flex;
    align-items: center;
    height: 22px;
    padding-bottom: 1px;
    border-top: 1px solid #858b95;
    background: linear-gradient(#e6e9ed, #b9bec6);
  }
  .hint {
    width: 50%;
    padding-left: 8px;
  }
  .num {
    display: flex;
    flex: 1;
    justify-content: flex-end;
    padding-right: 10px;
    border: 1px solid #858b95;
    border-width: 0 1px;
    line-height: 18px;
  }
  .view-buttons {
    display: flex;
  }
  .view-buttons button {
    display: grid;
    place-items: center;
    width: 18px;
    height: 19px;
  }
  .view-buttons button:first-child {
    margin-left: 5px;
  }
  .view-buttons .on {
    width: 20px;
    border: 1px solid #c2923a;
    border-radius: 2px;
    background: #ffd968;
  }

  /* Windows taskbar */
  footer {
    display: flex;
    align-items: center;
    height: 40px;
    padding: 0 2px 0 8px;
    border-top: 1px solid #2c3430;
    background: linear-gradient(#1c1c1c, #060606 8px, #101010);
    color: #fff;
  }
  .grip {
    width: 8px;
    height: 30px;
    margin: 0 10px 0 12px;
    background: radial-gradient(circle at 1px 1px, #444 1px, transparent 1px) 0 0 / 3px 4px;
  }
  .tasks {
    display: flex;
    flex: 1;
    gap: 4px;
  }
  .tasks button {
    display: grid;
    place-items: center;
    width: 58px;
    height: 38px;
  }
  .tasks .open {
    border: 1px solid #83888a;
    border-radius: 3px;
    background: linear-gradient(150deg, #777, #383838 45%, #171717 46%, #2c2c2c);
  }
  .tasks .front {
    border-color: #ccc;
    background: linear-gradient(150deg, #ccc, #999 45%, #707070 46%, #999);
  }
  .lang {
    margin-right: 16px;
    padding-bottom: 4px;
    font-size: 12px;
  }
  .tray {
    display: flex;
    gap: 6px;
    margin: 0 12px;
  }
  time {
    font-size: 12px;
    line-height: 17px;
    text-align: center;
  }
  .peek {
    width: 13px;
    height: 38px;
    margin-left: 12px;
    border: 1px solid #666;
    background: linear-gradient(135deg, #444, #111);
  }
</style>
